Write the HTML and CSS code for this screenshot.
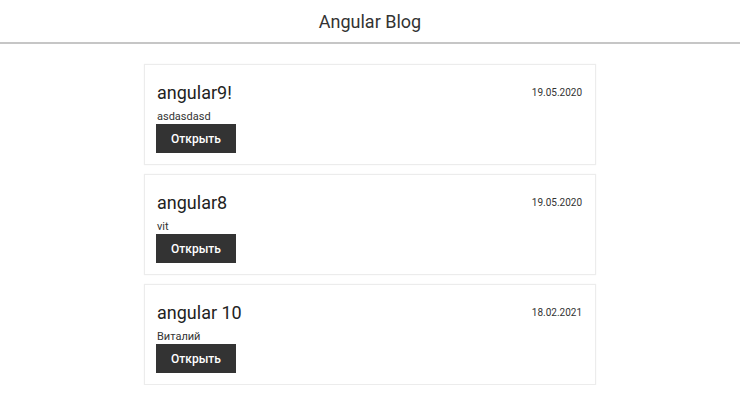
FILE: index.html
```html
<!DOCTYPE html>
<html lang="ru">
<head>
<meta charset="utf-8">
<title>Angular Blog</title>
<link rel="stylesheet" href="styles.css">
</head>
<body>
<header class="header">
  <h1 class="header-title">Angular Blog</h1>
</header>
<main class="posts">
  <article class="post">
    <div class="post-body">
      <h2 class="post-title">angular9!</h2>
      <p class="post-author">asdasdasd</p>
      <button class="post-btn">Открыть</button>
    </div>
    <time class="post-date">19.05.2020</time>
  </article>
  <article class="post">
    <div class="post-body">
      <h2 class="post-title">angular8</h2>
      <p class="post-author">vit</p>
      <button class="post-btn">Открыть</button>
    </div>
    <time class="post-date">19.05.2020</time>
  </article>
  <article class="post">
    <div class="post-body">
      <h2 class="post-title">angular 10</h2>
      <p class="post-author">Виталий</p>
      <button class="post-btn">Открыть</button>
    </div>
    <time class="post-date">18.02.2021</time>
  </article>
</main>
</body>
</html>
```
FILE: styles.css
```css
* { box-sizing: border-box; }
body {
  margin: 0;
  font-family: Roboto, "Noto Sans", Arial, sans-serif;
  color: #333;
  background: #fff;
}
.header {
  height: 44px;
  border-bottom: 2px solid #c6c6c6;
  display: flex;
  align-items: center;
  justify-content: center;
}
.header-title {
  margin: 0;
  font-size: 18px;
  font-weight: 400;
  color: #333;
}
.posts {
  width: 452px;
  margin: 20px auto 0;
  display: flex;
  flex-direction: column;
  gap: 9px;
}
.post {
  border: 1px solid #ececec;
  box-shadow: 0 0 1px rgba(0,0,0,0.08);
  padding: 17px 13px 11px 12px;
  display: flex;
  justify-content: space-between;
  align-items: flex-start;
  height: 101px;
}
.post-body {
  display: flex;
  flex-direction: column;
  align-items: flex-start;
}
.post-title {
  margin: 0;
  font-size: 18px;
  font-weight: 400;
  line-height: 22px;
  color: #222;
}
.post-author {
  margin: 7px 0 0;
  font-size: 11px;
  line-height: 12px;
  color: #333;
}
.post-btn {
  width: 80px;
  height: 29px;
  margin: 1px 0 0 -1px;
  background: #333;
  color: #fff;
  border: 0;
  font-family: inherit;
  font-size: 12px;
  font-weight: 500;
  padding: 0;
}
.post-date {
  font-size: 10px;
  margin-top: 5px;
  color: #333;
}
```
